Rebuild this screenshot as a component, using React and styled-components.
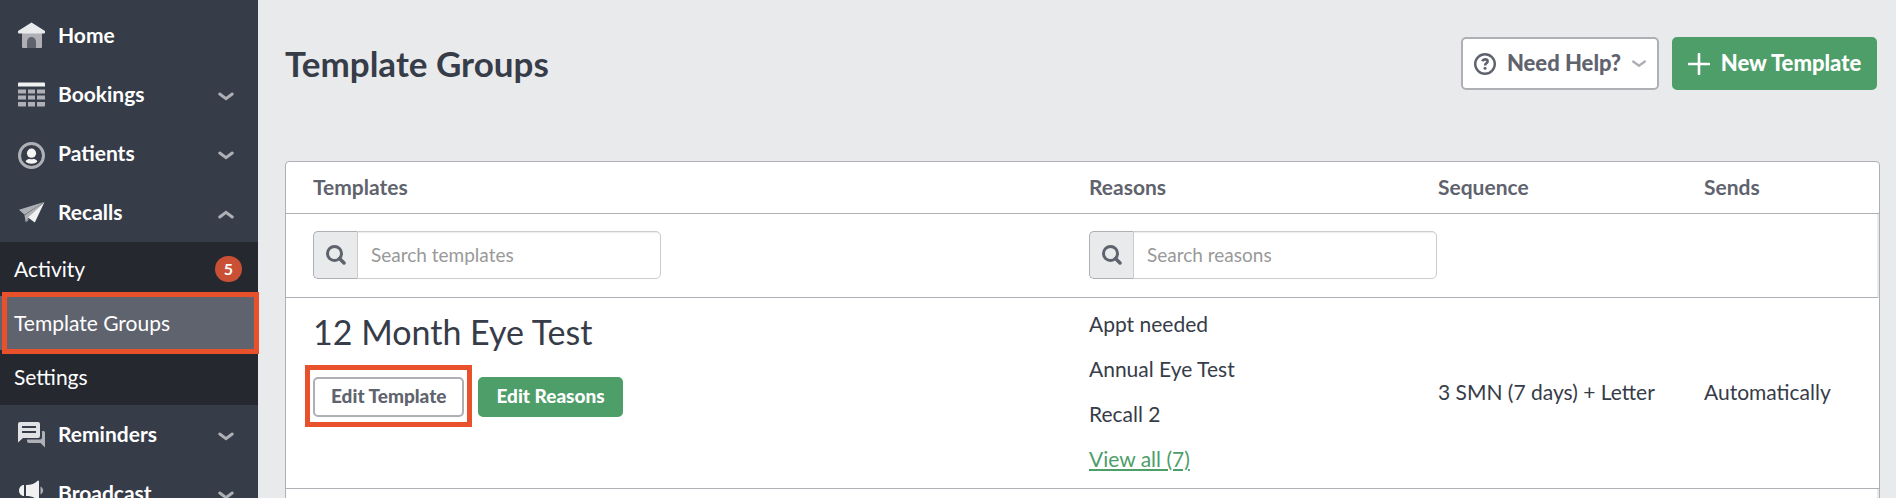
import React, { useState } from "react";
import styled, { createGlobalStyle, css } from "styled-components";

const colors = {
  navy: "#363c48",
  navyDark: "#25282f",
  slate: "#5f636e",
  line: "#aeb0b6",
  page: "#e9eaec",
  green: "#4d9e68",
  highlight: "#e9512d",
  badge: "#c94f35",
};

const GlobalStyle = createGlobalStyle`
  * {
    box-sizing: border-box;
  }
  body {
    margin: 0;
    background: ${colors.page};
    color: ${colors.navy};
    font-family: Lato, "Liberation Sans", sans-serif;
    font-size: 21px;
    line-height: 30px;
  }
`;

const Layout = styled.div`
  display: flex;
  height: 100vh;
  overflow: hidden;
`;

const Sidebar = styled.nav`
  flex: none;
  width: 258px;
  padding-top: 6px;
  background: ${colors.navy};
`;

const NavItem = styled.button`
  display: flex;
  align-items: center;
  gap: 13px;
  width: 100%;
  height: 59px;
  padding: 0 24px 0 18px;
  border: 0;
  background: none;
  color: #fff;
  font: inherit;
  font-weight: 700;
  text-align: left;
  cursor: pointer;
  svg {
    flex: none;
  }
`;

const NavLabel = styled.span`
  flex: 1;
  padding-bottom: 2px;
`;

const SubMenu = styled.div`
  padding-bottom: 1px;
  background: ${colors.navyDark};
`;

const SubLink = styled.a`
  position: relative;
  display: flex;
  align-items: center;
  justify-content: space-between;
  height: 54px;
  padding: 0 16px 0 14px;
  color: #fff;
  text-decoration: none;
  ${({ $active }) => $active && css`
    background: ${colors.slate};
  `}
`;

const Badge = styled.span`
  width: 27px;
  height: 26px;
  border-radius: 13px;
  background: ${colors.badge};
  font-size: 16px;
  font-weight: 700;
  line-height: 26px;
  text-align: center;
`;

const Highlight = styled.span`
  position: absolute;
  z-index: 1;
  inset: ${({ $inset }) => $inset};
  border: 5px solid ${colors.highlight};
  pointer-events: none;
`;

const Main = styled.main`
  flex: 1;
  min-width: 0;
  padding: 37px 16px 0 27px;
`;

const PageHeader = styled.header`
  display: flex;
  align-items: center;
  gap: 13px;
  margin-bottom: 71px;
  padding-right: 3px;
`;

const PageTitle = styled.h1`
  flex: 1;
  margin: 0;
  padding-bottom: 2px;
  font-size: 35px;
  font-weight: 700;
  line-height: 40px;
`;

const Button = styled.button`
  display: flex;
  align-items: center;
  justify-content: center;
  gap: 11px;
  height: 40px;
  padding: 0 16px;
  border: 2px solid ${({ $primary }) => ($primary ? colors.green : colors.line)};
  border-radius: 5px;
  background: ${({ $primary }) => ($primary ? colors.green : "#fff")};
  color: ${({ $primary }) => ($primary ? "#fff" : colors.slate)};
  font: inherit;
  font-size: 19px;
  font-weight: 900;
  white-space: nowrap;
  cursor: pointer;
`;

const HeaderButton = styled(Button)`
  min-width: ${({ $primary }) => ($primary ? 205 : 198)}px;
  height: 53px;
  padding: 0 10px;
  font-size: 22px;
`;

const ButtonLabel = styled.span`
  padding-bottom: 2px;
`;

const Card = styled.section`
  border: 1px solid ${colors.line};
  border-radius: 4px;
  background: #fff;
`;

const Table = styled.table`
  width: 100%;
  table-layout: fixed;
  border-spacing: 0;
  th,
  td {
    padding: 0 0 2px;
    border-bottom: 1px solid ${colors.line};
    text-align: left;
  }
  th:first-child,
  td:first-child {
    padding-left: 27px;
  }
`;

const Column = styled.col`
  width: ${({ $width }) => $width};
`;

const HeadCell = styled.th`
  height: 52px;
  color: ${colors.slate};
  font-weight: 700;
`;

const FilterRow = styled.tr`
  height: 84px;
  td:last-child {
    border-right: 2px solid ${colors.page};
  }
`;

const TopCell = styled.td`
  vertical-align: top;
`;

const SearchGroup = styled.label`
  display: flex;
  width: 348px;
  height: 48px;
`;

const SearchAddon = styled.span`
  display: flex;
  align-items: center;
  justify-content: center;
  width: 44px;
  border: 1px solid ${colors.line};
  border-right: 0;
  border-radius: 5px 0 0 5px;
  background: ${colors.page};
`;

const SearchInput = styled.input`
  flex: 1;
  min-width: 0;
  padding: 0 13px;
  border: 1px solid #ccc;
  border-radius: 0 5px 5px 0;
  box-shadow: inset 0 1px 1px rgba(0, 0, 0, 0.075);
  color: ${colors.navy};
  font: inherit;
  font-size: 19px;
  &::placeholder {
    color: #999;
    opacity: 1;
  }
`;

const TemplateName = styled.h2`
  margin: 14px 0 25px;
  font-size: 34px;
  font-weight: 400;
  line-height: 40px;
`;

const Actions = styled.div`
  display: flex;
  gap: 14px;
`;

const Highlighted = styled.div`
  position: relative;
`;

const ReasonList = styled.ul`
  margin: 0;
  padding: 3px 0 5px;
  list-style: none;
`;

const Reason = styled.li`
  line-height: 45px;
`;

const ViewAll = styled.a`
  color: ${colors.green};
  text-decoration: underline;
`;

const HomeIcon = () => (
  <svg width="27" height="27" viewBox="0 0 27 27">
    <path d="M4 10h20v15a1 1 0 0 1-1 1H5a1 1 0 0 1-1-1z" fill="#aeb0b6" />
    <path d="M9 26v-6a4.500 5 0 0 1 9 0v6z" fill="#5f636e" />
    <path d="M13.500 0.500L27 9v1.500a1 1 0 0 1-1 1H1a1 1 0 0 1-1-1V9z" fill="#e9eaec" />
  </svg>
);

const BookingsIcon = () => (
  <svg width="27" height="25" viewBox="0 0 27 25">
    <path d="M1 0.500h25a1 1 0 0 1 1 1V4.500H0V1.500a1 1 0 0 1 1-1z" fill="#f1f1f2" />
    <path
      d="M0 7.500h8v4H0zM10 7.500h7v4h-7zM19 7.500h8v4h-8zM0 13.500h8v4H0zM10 13.500h7v4h-7zM19 13.500h8v4h-8zM0 20h8v4.500H1a1 1 0 0 1-1-1zM10 20h7v4.500h-7zM19 20h8v3.500a1 1 0 0 1-1 1h-7z"
      fill="#aeb0b6"
    />
  </svg>
);

const PatientsIcon = () => (
  <svg width="27" height="31" viewBox="0 0 27 31">
    <circle cx="13.500" cy="17.500" r="12" fill="none" stroke="#aeb0b6" strokeWidth="3" />
    <circle cx="13.500" cy="15.200" r="4.600" fill="#f5f5f6" />
    <path d="M7.500 23.300c1-1.800 3-2.300 4.300-2.300 1.200.4 2.200.4 3.400 0 1.300 0 3.300.5 4.300 2.300-1.500 1.800-3.800 2.400-6 2.400s-4.500-.6-6-2.400z" fill="#f5f5f6" />
  </svg>
);

const RecallsIcon = () => (
  <svg width="27" height="23" viewBox="0 0 27 23">
    <path d="M26 1L1 8.800l5.500 5z" fill="#aeb0b6" />
    <path d="M26 1L6.500 14.200l1.200 7.300 2.300-4z" fill="#aeb0b6" />
    <path d="M7.700 21.500l3.500-2.700-1.700-1z" fill="#8a8d95" />
    <path d="M26.500 1L10 16.500l6.800 5z" fill="#f1f1f2" />
  </svg>
);

const RemindersIcon = () => (
  <svg width="27" height="27" viewBox="0 0 27 27">
    <path d="M24 10h1.500a1.500 1.500 0 0 1 1.500 1.500v15L22.500 22H11a2 2 0 0 1-2-2v-1.500h13a2 2 0 0 0 2-2z" fill="#aeb0b6" />
    <path d="M2 1h18a2 2 0 0 1 2 2v12a2 2 0 0 1-2 2H5L0 21.500V3a2 2 0 0 1 2-2z" fill="#e1e2e4" />
    <path d="M4 6h14M4 11h14" stroke="#363c48" strokeWidth="2" />
  </svg>
);

const BroadcastIcon = () => (
  <svg width="27" height="27" viewBox="0 0 27 27">
    <path d="M6 5v11C3 16 1 13.500 1 10.500S3 5 6 5z" fill="#f1f1f2" />
    <path d="M8 5c5 0 9-1.500 12-4.500a1 1 0 0 1 1 1v18a1 1 0 0 1-1 1c-3-3-7-4.500-12-4.500z" fill="#f1f1f2" />
    <path d="M7 18h5l2 8H9z" fill="#aeb0b6" />
    <path d="M22.500 6.500c3.500 2 3.500 6 0 8z" fill="#aeb0b6" />
  </svg>
);

const ChevronIcon = ({ up }) => (
  <svg width="16" height="12" viewBox="0 0 16 12">
    <path
      d={up ? "M1.800 10L8 5.300l6.200 4.700" : "M1.800 5L8 9.700l6.200-4.700"}
      fill="none"
      stroke="#aeb0b6"
      strokeWidth="3"
      strokeLinecap="round"
    />
  </svg>
);

const HelpIcon = () => (
  <svg width="22" height="22" viewBox="0 0 22 22" fill="none" stroke={colors.slate}>
    <circle cx="11" cy="11" r="9.800" strokeWidth="2.400" />
    <path d="M8.200 8.200c.6-1.300 1.600-1.800 2.900-1.800 1.500 0 2.500.8 2.500 2 0 1.900-2.500 1.900-2.500 4" strokeWidth="2.600" />
    <circle cx="11" cy="15.300" r="1.500" fill={colors.slate} stroke="none" />
  </svg>
);

const CaretIcon = () => (
  <svg width="14" height="8" viewBox="0 0 14 8">
    <path d="M1.200 1.500L7 5.800l5.800-4.300" fill="none" stroke="#aeb0b6" strokeWidth="2.400" strokeLinecap="round" />
  </svg>
);

const PlusIcon = () => (
  <svg width="22" height="22" viewBox="0 0 22 22">
    <path d="M11 1v20M1 11h20" stroke="#fff" strokeWidth="2.600" strokeLinecap="round" />
  </svg>
);

const SearchIcon = () => (
  <svg width="20" height="20" viewBox="0 0 20 20" fill="none" stroke={colors.slate}>
    <circle cx="8.500" cy="8.500" r="7" strokeWidth="3" />
    <path d="M13.500 13.500l4.500 4.500" strokeWidth="3.500" strokeLinecap="round" />
  </svg>
);

const mainItems = [
  { label: "Home", Icon: HomeIcon },
  { label: "Bookings", Icon: BookingsIcon, expandable: true },
  { label: "Patients", Icon: PatientsIcon, expandable: true },
  { label: "Recalls", Icon: RecallsIcon, expandable: true },
  { label: "Reminders", Icon: RemindersIcon, expandable: true },
  { label: "Broadcast", Icon: BroadcastIcon, expandable: true },
];

const recallItems = [
  { label: "Activity", count: 5 },
  { label: "Template Groups", active: true },
  { label: "Settings" },
];

const reasons = ["Appt needed", "Annual Eye Test", "Recall 2"];

function SearchBox({ placeholder }) {
  const [value, setValue] = useState("");

  return (
    <SearchGroup>
      <SearchAddon>
        <SearchIcon />
      </SearchAddon>
      <SearchInput
        aria-label={placeholder}
        placeholder={placeholder}
        value={value}
        onChange={(e) => setValue(e.target.value)}
      />
    </SearchGroup>
  );
}

function Navigation() {
  const [openItem, setOpenItem] = useState("Recalls");

  return (
    <Sidebar>
      {mainItems.map(({ label, Icon, expandable }) => (
        <React.Fragment key={label}>
          <NavItem onClick={() => expandable && setOpenItem(openItem === label ? "" : label)}>
            <Icon />
            <NavLabel>{label}</NavLabel>
            {expandable && <ChevronIcon up={openItem === label} />}
          </NavItem>
          {label === "Recalls" && openItem === label && (
            <SubMenu>
              {recallItems.map((item) => (
                <SubLink key={item.label} href="#" $active={item.active}>
                  {item.label}
                  {item.count && <Badge>{item.count}</Badge>}
                  {item.active && <Highlight $inset="-4px -1px -4px 2px" />}
                </SubLink>
              ))}
            </SubMenu>
          )}
        </React.Fragment>
      ))}
    </Sidebar>
  );
}

function App() {
  return (
    <Layout>
      <GlobalStyle />
      <Navigation />
      <Main>
        <PageHeader>
          <PageTitle>Template Groups</PageTitle>
          <HeaderButton>
            <HelpIcon />
            <ButtonLabel>Need Help?</ButtonLabel>
            <CaretIcon />
          </HeaderButton>
          <HeaderButton $primary>
            <PlusIcon />
            <ButtonLabel>New Template</ButtonLabel>
          </HeaderButton>
        </PageHeader>
        <Card>
          <Table>
            <colgroup>
              <Column $width="auto" />
              <Column $width="349px" />
              <Column $width="266px" />
              <Column $width="175px" />
            </colgroup>
            <thead>
              <tr>
                <HeadCell>Templates</HeadCell>
                <HeadCell>Reasons</HeadCell>
                <HeadCell>Sequence</HeadCell>
                <HeadCell>Sends</HeadCell>
              </tr>
            </thead>
            <tbody>
              <FilterRow>
                <td><SearchBox placeholder="Search templates" /></td>
                <td><SearchBox placeholder="Search reasons" /></td>
                <td />
                <td />
              </FilterRow>
              <tr>
                <TopCell>
                  <TemplateName>12 Month Eye Test</TemplateName>
                  <Actions>
                    <Highlighted>
                      <Button><ButtonLabel>Edit Template</ButtonLabel></Button>
                      <Highlight $inset="-12px -8px -10px -8px" />
                    </Highlighted>
                    <Button $primary><ButtonLabel>Edit Reasons</ButtonLabel></Button>
                  </Actions>
                </TopCell>
                <td>
                  <ReasonList>
                    {reasons.map((reason) => (
                      <Reason key={reason}>{reason}</Reason>
                    ))}
                    <Reason><ViewAll href="#">View all (7)</ViewAll></Reason>
                  </ReasonList>
                </td>
                <td>3 SMN (7 days) + Letter</td>
                <td>Automatically</td>
              </tr>
              <FilterRow>
                <td />
                <td />
                <td />
                <td />
              </FilterRow>
            </tbody>
          </Table>
        </Card>
      </Main>
    </Layout>
  );
}

export default App;
